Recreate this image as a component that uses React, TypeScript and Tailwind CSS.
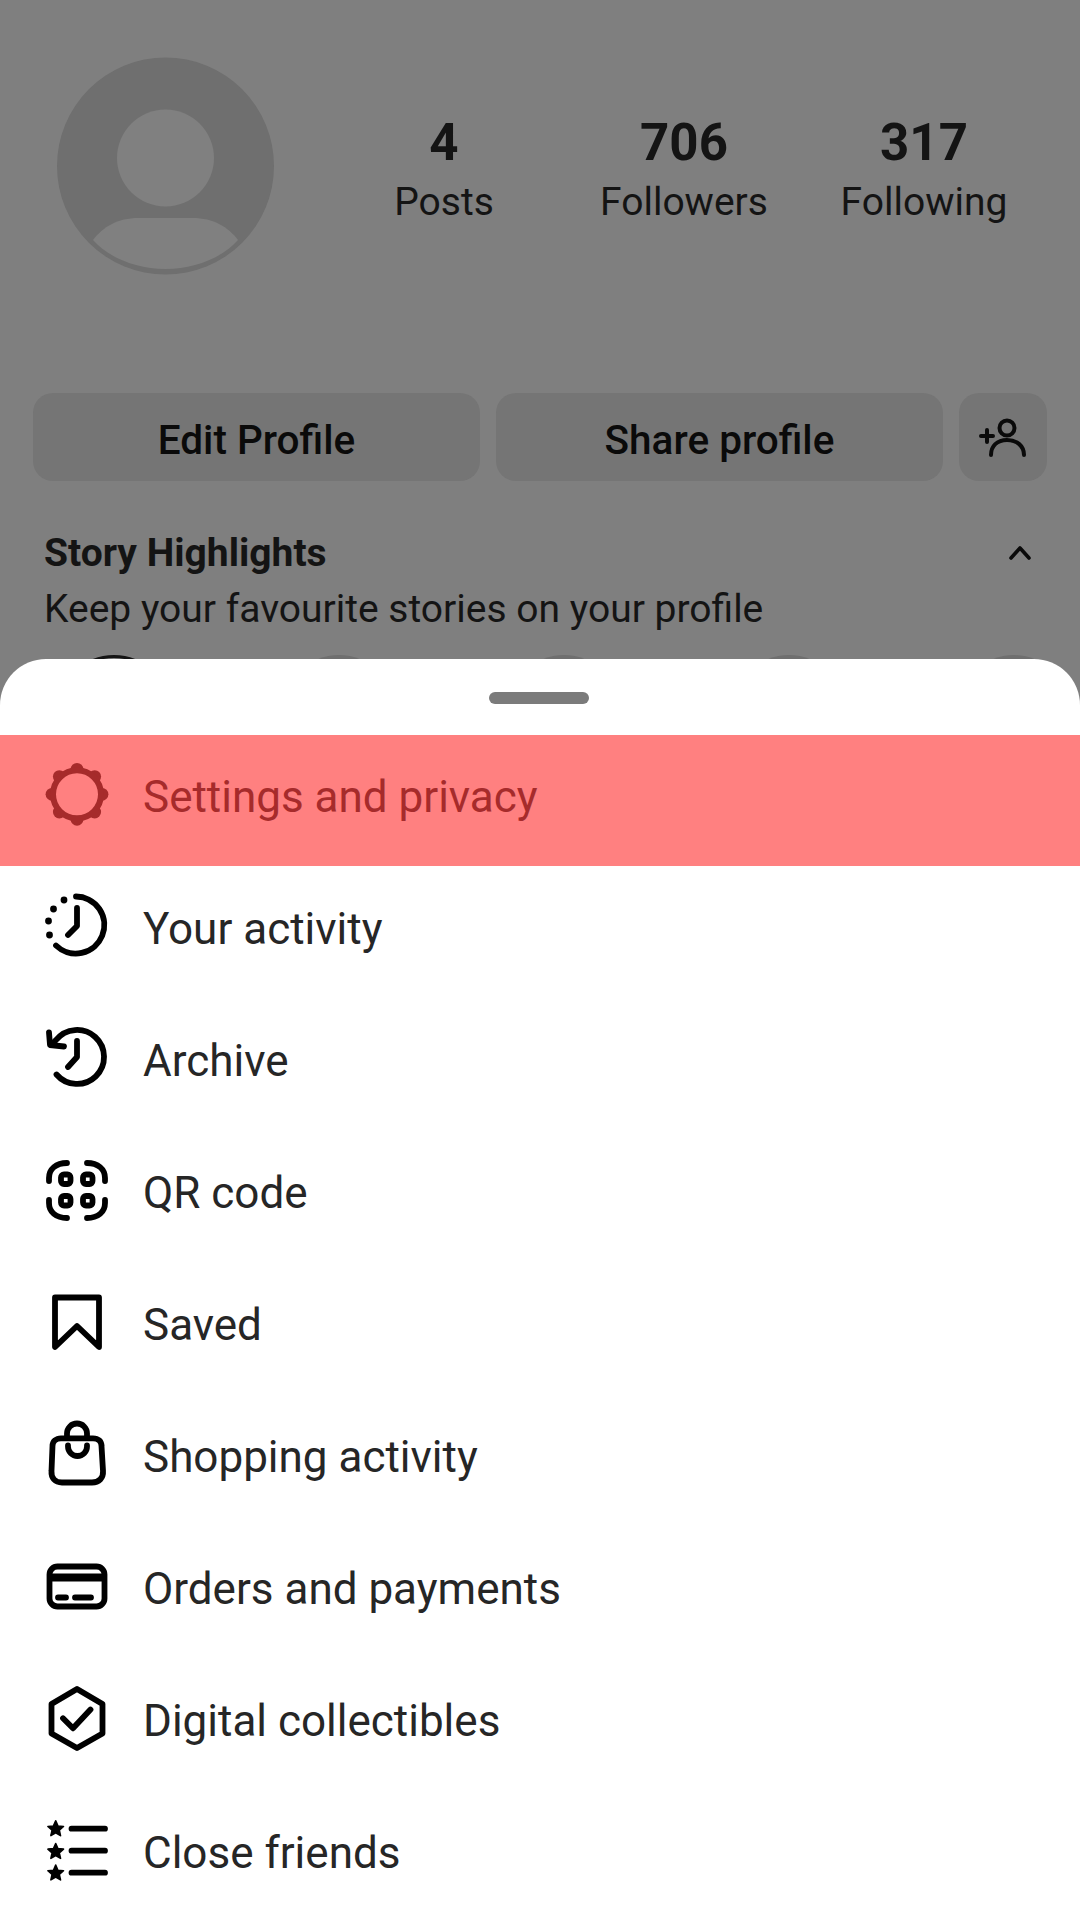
const font = { fontFamily: "Roboto, 'Noto Sans', sans-serif" };

function Icon({ offset, color = "#000", children }: { offset: number; color?: string; children: React.ReactNode }) {
  return (
    <svg
      width="100"
      height="100"
      viewBox={`0 ${16 - offset} 100 100`}
      fill="none"
      stroke={color}
      strokeWidth="5.8"
      strokeLinecap="round"
      strokeLinejoin="round"
      className="shrink-0"
    >
      {children}
    </svg>
  );
}

const gearBumps = [0, 45, 90, 135, 180, 225, 270, 315].map((a) => {
  const r = (a * Math.PI) / 180;
  return [47 + 25 * Math.cos(r), 44.3 + 25 * Math.sin(r)];
});

const star = (cx: number, cy: number) => {
  const pts: string[] = [];
  for (let i = 0; i < 10; i++) {
    const R = i % 2 === 0 ? 8.2 : 3.8;
    const a = (-90 + i * 36) * (Math.PI / 180);
    pts.push(`${(cx + R * Math.cos(a)).toFixed(2)},${(cy + R * Math.sin(a)).toFixed(2)}`);
  }
  return pts.join(" ");
};

const rows: { label: string; offset: number; icon: React.ReactNode }[] = [
  {
    label: "Your activity",
    offset: 13,
    icon: (
      <>
        <path d="M46 16.5A28.5 28.5 0 1 1 26 65.5" />
        <path d="M47 28V46L38 55" />
        <g fill="#000" stroke="none">
          <circle cx="34" cy="20" r="3.4" />
          <circle cx="23.5" cy="29" r="3.4" />
          <circle cx="18.5" cy="41" r="3.4" />
          <circle cx="19.5" cy="55" r="3.4" />
        </g>
      </>
    ),
  },
  {
    label: "Archive",
    offset: 11,
    icon: (
      <>
        <path d="M26.5 64.5A27 27 0 1 0 26 30L21 35" />
        <path d="M19 22.5L20 35L34 36.5" />
        <path d="M47 31V47L38 57" />
      </>
    ),
  },
  {
    label: "QR code",
    offset: 9,
    icon: (
      <>
        <path d="M19 41V38C19 29 26 23 37 23" />
        <path d="M57 23C68 23 75 29 75 38V41" />
        <path d="M19 60V63C19 72 26 78 37 78" />
        <path d="M75 60V63C75 72 68 78 57 78" />
        <rect x="31" y="34.5" width="9.5" height="9.5" rx="3" />
        <rect x="53" y="34.5" width="9.5" height="9.5" rx="3" />
        <rect x="31" y="56" width="9.5" height="9.5" rx="3" />
        <rect x="53" y="56" width="9.5" height="9.5" rx="3" />
      </>
    ),
  },
  {
    label: "Saved",
    offset: 12,
    icon: <path d="M25 22.5H69V72L47 51L25 72Z" />,
  },
  {
    label: "Shopping activity",
    offset: 10,
    icon: (
      <>
        <path d="M31 33.3H63C68.5 33.3 71.5 36.5 71.5 41L73 66C73.5 73 69 77.5 62 77.5H32C25 77.5 21 73 21.5 66L22.5 41C22.5 36.5 26 33.3 31 33.3Z" />
        <path d="M37 33V28.5A10 10 0 0 1 57 28.5V33" />
        <path d="M38 40.5V41.5A9.5 9.5 0 0 0 57 41.5V40.5" />
      </>
    ),
  },
  {
    label: "Orders and payments",
    offset: 13,
    icon: (
      <>
        <rect x="19.5" y="26.5" width="55" height="40" rx="8" />
        <path d="M19.5 37.5H74.5" strokeWidth="8" strokeLinecap="butt" />
        <path d="M28 57.5H36M45 57.5H61" />
      </>
    ),
  },
  {
    label: "Digital collectibles",
    offset: 11,
    icon: (
      <>
        <path d="M47 19L72.5 34V63.5L47 78L21.5 63.5V34Z" />
        <path d="M33 48.3L43 58.3L60.5 39.5" />
      </>
    ),
  },
  {
    label: "Close friends",
    offset: 14,
    icon: (
      <>
        <path d="M41.5 23.7H75M41.5 45.7H75M41.5 67.7H75" />
        <g fill="#000" stroke="#000" strokeWidth="1.6">
          <polygon points={star(25.7, 24)} />
          <polygon points={star(25.7, 46.7)} />
          <polygon points={star(25.7, 68.3)} />
        </g>
      </>
    ),
  },
];

function Stat({ n, label }: { n: string; label: string }) {
  return (
    <div className="w-[240px] flex flex-col items-center">
      <div className="text-[51px] leading-[50px] font-bold text-[#141414]">{n}</div>
      <div className="text-[39px] leading-[46px] text-[#141414] mt-[11px]">{label}</div>
    </div>
  );
}

export default function App() {
  return (
    <div className="relative w-[1080px] h-[1920px] overflow-hidden bg-[#7f7f7f]" style={font}>
      <div className="flex pl-[57px] pt-[57px]">
        <svg width="217" height="218" viewBox="0 0 217 218" className="shrink-0">
          <circle cx="108.5" cy="109" r="108.5" fill="#6f6f6f" />
          <circle cx="108.5" cy="101" r="48.5" fill="#808080" />
          <path d="M36 183C46 170 60 161 82 161H135C157 161 171 170 181 183C165 201 137 212 108.5 212C80 212 52 201 36 183Z" fill="#808080" />
        </svg>
        <div className="flex ml-[50px] pt-[61px]">
          <Stat n="4" label="Posts" />
          <Stat n="706" label="Followers" />
          <Stat n="317" label="Following" />
        </div>
      </div>

      <div className="flex gap-[16px] pl-[33px] mt-[118px]">
        <div className="w-[447px] h-[88px] pt-[6px] rounded-[20px] bg-[#757575] flex items-center justify-center text-[40.5px] font-medium text-[#0a0a0a]">
          Edit Profile
        </div>
        <div className="w-[447px] h-[88px] pt-[6px] rounded-[20px] bg-[#757575] flex items-center justify-center text-[40.5px] font-medium text-[#0a0a0a]">
          Share profile
        </div>
        <div className="w-[88px] h-[88px] rounded-[20px] bg-[#757575] flex items-center justify-center">
          <svg width="50" height="40" viewBox="0 0 50 40" fill="none" stroke="#0a0a0a" strokeWidth="4" strokeLinecap="round">
            <circle cx="29" cy="11" r="7.5" />
            <path d="M13 38C13 29 19 23 29 23C39 23 46 29 46 38" />
            <path d="M3 19H15M9 13V25" />
          </svg>
        </div>
      </div>

      <div className="flex items-center justify-between pl-[44px] pr-[48px] mt-[50px]">
        <div className="text-[39px] leading-[44px] font-bold text-[#141414]">Story Highlights</div>
        <svg width="24" height="16" viewBox="0 0 24 16" fill="none" stroke="#0a0a0a" strokeWidth="3.6" strokeLinecap="round" strokeLinejoin="round">
          <path d="M3 13L12 3L21 13" />
        </svg>
      </div>
      <div className="pl-[44px] mt-[12px] text-[39px] leading-[44px] text-[#141414]">
        Keep your favourite stories on your profile
      </div>

      <div className="flex pl-[59px] mt-[24px] gap-[115px]">
        <div className="w-[110px] h-[110px] rounded-full border-[3px] border-[#141414] shrink-0" />
        <div className="w-[110px] h-[110px] rounded-full bg-[#6f6f6f] shrink-0" />
        <div className="w-[110px] h-[110px] rounded-full bg-[#6f6f6f] shrink-0" />
        <div className="w-[110px] h-[110px] rounded-full bg-[#6f6f6f] shrink-0" />
        <div className="w-[110px] h-[110px] rounded-full bg-[#6f6f6f] shrink-0" />
      </div>

      <div className="absolute left-0 right-0 top-[659px] bottom-0 bg-white rounded-t-[46px]">
        <div className="flex justify-center pt-[33px] h-[76px]">
          <div className="w-[100px] h-[12px] rounded-full bg-[#7b7b7b] -ml-[2px]" />
        </div>
        <div className="h-[131px] bg-[#ff8080] flex items-center pl-[30px]">
          <Icon offset={15} color="#a62b2b">
            <g fill="#a62b2b" stroke="none">
              {gearBumps.map(([x, y], i) => (
                <circle key={i} cx={x} cy={y} r="6.4" />
              ))}
            </g>
            <circle cx="47" cy="44.3" r="24" strokeWidth="6" fill="#ff8080" />
          </Icon>
          <span className="ml-[13px] text-[44px] leading-[48px] text-[#a62b2b] -mt-[8px]">Settings and privacy</span>
        </div>
        <div className="pt-[1px]">
          {rows.map((r) => (
            <div key={r.label} className="h-[132px] flex items-center pl-[30px]">
              <Icon offset={r.offset}>{r.icon}</Icon>
              <span className="ml-[13px] text-[44px] leading-[48px] text-[#262626] -mt-[8px]">{r.label}</span>
            </div>
          ))}
        </div>
      </div>
    </div>
  );
}
